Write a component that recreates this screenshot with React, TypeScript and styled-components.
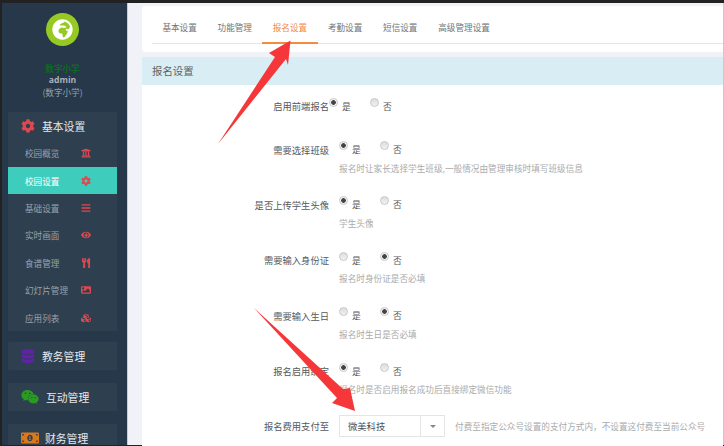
import React from "react";
import styled, { createGlobalStyle } from "styled-components";
import {
  FaCog, FaUniversity, FaBars, FaEye, FaUtensils, FaImage, FaCubes, FaDatabase, FaWeixin, FaMoneyBillAlt, FaGlobeAfrica,
} from "react-icons/fa";

const Global = createGlobalStyle`
  html, body { margin: 0; padding: 0; background: #222; }
  body { font-family: "Noto Sans CJK SC", "Liberation Sans", sans-serif; }
`;

const Page = styled.div`
  position: relative;
  width: 724px;
  height: 446px;
  overflow: hidden;
  box-sizing: border-box;
  padding: 3px 0 1px 2px;
  background: #222;
  display: flex;
`;

const Sidebar = styled.aside`
  flex: none;
  background: #263849;
  border-right: 1px solid #c9ccd2;
  padding: 0 10px 0 6px;
  width: 109px;
  overflow: hidden;
`;

const Profile = styled.div`
  display: flex;
  flex-direction: column;
  align-items: center;
  padding-top: 10px;
  height: 109px;
  box-sizing: border-box;
`;

const Avatar = styled.div`
  width: 33px;
  height: 33px;
  border-radius: 50%;
  background: #97c924;
  display: flex;
  align-items: center;
  justify-content: center;
  color: #fff;
  font-size: 21px;
  margin-bottom: 16px;
`;

const SchoolName = styled.div`
  font-size: 8.6px;
  line-height: 12px;
  font-weight: 700;
  color: #0b6b22;
`;

const AdminName = styled.div`
  font-family: "Open Sans", sans-serif;
  font-size: 8.6px;
  line-height: 13px;
  font-weight: 700;
  color: #a9b1b9;
`;

const SchoolSub = styled.div`
  font-size: 8.6px;
  line-height: 11px;
  color: #9aa3ab;
`;

const Group = styled.div<{ $gap?: number }>`
  background: #2e3f50;
  margin-bottom: ${(p) => p.$gap ?? 13}px;
  border-radius: 1px;
`;

const GroupHead = styled.div<{ $height?: number; $gap?: number }>`
  height: ${(p) => p.$height ?? 28}px;
  display: flex;
  align-items: center;
  padding-left: 13px;
  color: #e6e9ec;
  font-size: 10.8px;
  gap: ${(p) => p.$gap ?? 7}px;
`;

const GroupIcon = styled.span<{ $color: string; $size: number }>`
  display: flex;
  width: ${(p) => p.$size}px;
  color: ${(p) => p.$color};
  font-size: ${(p) => p.$size}px;
`;

const Item = styled.div<{ $active?: boolean }>`
  height: 27.4px;
  display: flex;
  align-items: center;
  padding-left: 17px;
  font-size: 8.6px;
  color: ${(p) => (p.$active ? "#fff" : "#98a2ab")};
  background: ${(p) => (p.$active ? "#3ecdbd" : "transparent")};
`;

const ItemName = styled.span`
  width: 34px;
  white-space: nowrap;
`;

const ItemIcon = styled.span`
  margin-left: 22px;
  width: 10px;
  display: flex;
  justify-content: center;
  color: #e0484f;
  font-size: 10px;
`;

const Main = styled.main`
  flex: 1;
  min-width: 0;
  background: #f0f2f8;
  padding: 3px 0 0 14px;
  border-right: 1px solid #9fdbe6;
`;

const TabsCard = styled.div`
  height: 46px;
  background: #fff;
  border-radius: 3px 0 0 3px;
  padding: 0 0 0 10px;
  box-sizing: border-box;
`;

const Tabs = styled.nav`
  display: flex;
  height: 37px;
  border-bottom: 1px solid #e4e5e7;
`;

const Tab = styled.div<{ $active?: boolean }>`
  position: relative;
  padding: 0 10.4px;
  height: 37px;
  display: flex;
  align-items: center;
  padding-top: 5px;
  box-sizing: border-box;
  font-size: 8.6px;
  color: ${(p) => (p.$active ? "#f58b3d" : "#6f7477")};
  ${(p) => (p.$active ? "box-shadow: inset 0 -2px 0 #f58b3d; margin-bottom: -1px; height: 38px; padding-bottom: 1px;" : "")}
`;

const Panel = styled.section`
  margin-top: 5px;
  background: #fff;
  height: 400px;
`;

const PanelHead = styled.div`
  height: 28px;
  background: #d9edf5;
  display: flex;
  align-items: center;
  padding: 0 0 2px 10px;
  box-sizing: border-box;
  font-size: 10.4px;
  color: #5b6164;
`;

const Form = styled.div`
  padding-top: 12px;
`;

const Row = styled.div<{ $height: number }>`
  display: grid;
  grid-template-columns: 187px 1fr;
  column-gap: 10px;
  height: ${(p) => p.$height}px;
`;

const Label = styled.div`
  text-align: right;
  font-size: 9.3px;
  line-height: 18px;
  color: #55595c;
  white-space: nowrap;
`;

const Radios = styled.div<{ $shift?: number }>`
  height: 18px;
  display: flex;
  align-items: center;
  margin-left: ${(p) => p.$shift ?? 0}px;
`;

const RadioOption = styled.div`
  width: 41px;
  display: flex;
  align-items: center;
  font-size: 8.8px;
  color: #55595c;
  gap: 4px;
`;

const Dot = styled.span<{ $on?: boolean }>`
  width: 9px;
  height: 9px;
  box-sizing: border-box;
  border-radius: 50%;
  border: 1px solid #c6c8ca;
  background: ${(p) =>
    p.$on
      ? "radial-gradient(circle, #444 0 2px, #f4f4f4 2.6px)"
      : "linear-gradient(#dcdcdc, #f2f2f2)"};
  transform: translateY(-4px);
`;

const Help = styled.div`
  font-size: 8.65px;
  line-height: 19px;
  color: #a9abad;
  white-space: nowrap;
`;

const SelectLine = styled.div`
  display: flex;
  align-items: center;
  height: 18px;
`;

const SelectBox = styled.div`
  width: 106px;
  height: 22px;
  flex: none;
  box-sizing: border-box;
  border: 1px solid #e3e5e7;
  display: flex;
  align-items: center;
  font-size: 9.3px;
  color: #4c5053;
`;

const SelectText = styled.div`
  flex: 1;
  padding-left: 8px;
`;

const Caret = styled.div`
  width: 23px;
  align-self: stretch;
  border-left: 1px solid #e3e5e7;
  display: flex;
  align-items: center;
  justify-content: center;
  &::after {
    content: "";
    border-left: 3.5px solid transparent;
    border-right: 3.5px solid transparent;
    border-top: 3.5px solid #888;
  }
`;

const SelectHelp = styled(Help)`
  margin-left: 10px;
`;

const Overlay = styled.svg`
  position: absolute;
  left: 0;
  top: 0;
  pointer-events: none;
`;

const subItems: [string, React.ReactNode, boolean?][] = [
  ["校园概览", <FaUniversity />],
  ["校园设置", <FaCog />, true],
  ["基础设置", <FaBars />],
  ["实时画面", <FaEye />],
  ["食谱管理", <FaUtensils />],
  ["幻灯片管理", <FaImage />],
  ["应用列表", <FaCubes />],
];

const tabs = ["基本设置", "功能管理", "报名设置", "考勤设置", "短信设置", "高级管理设置"];

const rows: { label: string; yes: boolean; help: string }[] = [
  { label: "需要选择班级", yes: true, help: "报名时让家长选择学生班级,一般情况由管理审核时填写班级信息" },
  { label: "是否上传学生头像", yes: true, help: "学生头像" },
  { label: "需要输入身份证", yes: false, help: "报名时身份证是否必填" },
  { label: "需要输入生日", yes: false, help: "报名时生日是否必填" },
  { label: "报名启用绑定", yes: true, help: "报名时是否启用报名成功后直接绑定微信功能" },
];

export default function App() {
  return (
    <Page>
      <Global />
      <Sidebar>
        <Profile>
          <Avatar><FaGlobeAfrica /></Avatar>
          <SchoolName>数字小学</SchoolName>
          <AdminName>admin</AdminName>
          <SchoolSub>(数字小学)</SchoolSub>
        </Profile>
        <Group $gap={11}>
          <GroupHead $height={27.6}>
            <GroupIcon $color="#e0484f" $size={14}><FaCog /></GroupIcon>
            基本设置
          </GroupHead>
          {subItems.map(([name, icon, active]) => (
            <Item key={name} $active={active}>
              <ItemName>{name}</ItemName>
              <ItemIcon>{icon}</ItemIcon>
            </Item>
          ))}
        </Group>
        <Group>
          <GroupHead>
            <GroupIcon $color="#5f23a5" $size={14}><FaDatabase /></GroupIcon>
            教务管理
          </GroupHead>
        </Group>
        <Group>
          <GroupHead>
            <GroupIcon $color="#2b9a22" $size={18}><FaWeixin /></GroupIcon>
            互动管理
          </GroupHead>
        </Group>
        <Group>
          <GroupHead $gap={6}>
            <GroupIcon $color="#d9791c" $size={18}><FaMoneyBillAlt /></GroupIcon>
            财务管理
          </GroupHead>
        </Group>
      </Sidebar>
      <Main>
        <TabsCard>
          <Tabs>
            {tabs.map((t) => (
              <Tab key={t} $active={t === "报名设置"}>{t}</Tab>
            ))}
          </Tabs>
        </TabsCard>
        <Panel>
          <PanelHead>报名设置</PanelHead>
          <Form>
            <Row $height={43.5}>
              <Label>启用前端报名</Label>
              <Radios $shift={-10}>
                <RadioOption><Dot $on />是</RadioOption>
                <RadioOption><Dot />否</RadioOption>
              </Radios>
            </Row>
            {rows.map((r) => (
              <Row key={r.label} $height={55.4}>
                <Label>{r.label}</Label>
                <div>
                  <Radios>
                    <RadioOption><Dot $on={r.yes} />是</RadioOption>
                    <RadioOption><Dot $on={!r.yes} />否</RadioOption>
                  </Radios>
                  <Help>{r.help}</Help>
                </div>
              </Row>
            ))}
            <Row $height={30}>
              <Label>报名费用支付至</Label>
              <SelectLine>
                <SelectBox>
                  <SelectText>微美科技</SelectText>
                  <Caret />
                </SelectBox>
                <SelectHelp>付费至指定公众号设置的支付方式内，不设置这付费至当前公众号</SelectHelp>
              </SelectLine>
            </Row>
          </Form>
        </Panel>
      </Main>
      <Overlay width="724" height="446" viewBox="0 0 724 446">
        <polygon points="290.5,40.5 269,53 275,57 218,144 286,59 288,65" fill="#f5373a" />
        <polygon points="254,308 337,398 332,403 355,411 350,388 343,389" fill="#f5373a" />
      </Overlay>
    </Page>
  );
}
